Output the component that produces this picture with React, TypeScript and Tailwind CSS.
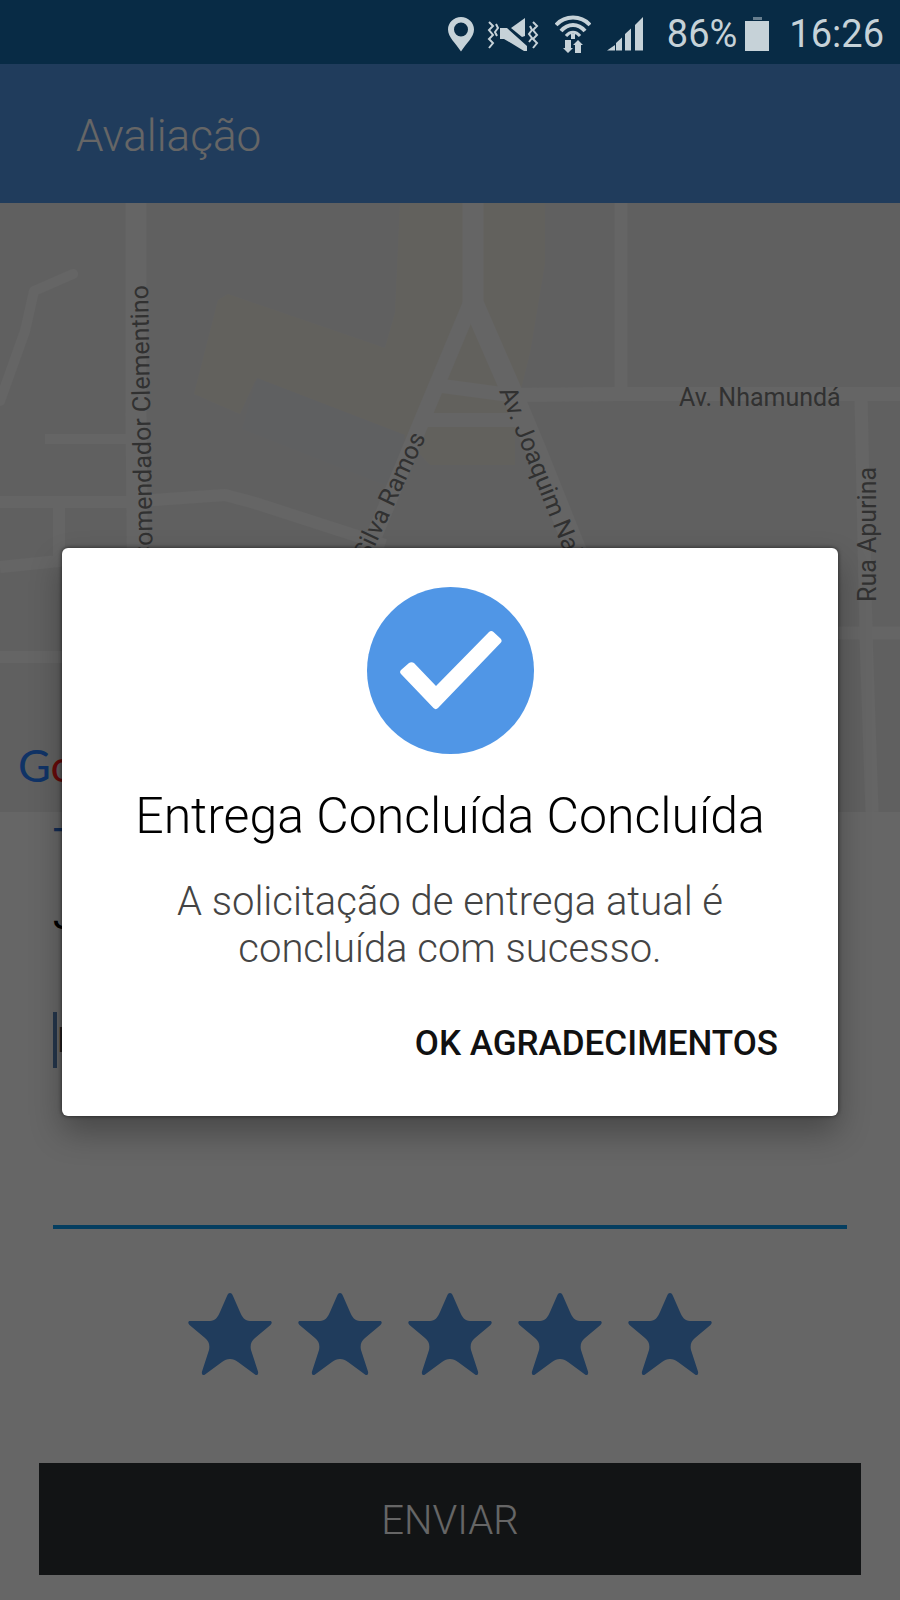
import { useState } from "react";

const STARS = [1, 2, 3, 4, 5];

function StatusBar() {
  return (
    <div className="flex h-16 items-center justify-end bg-[#082b45] pt-1 pr-4 text-[#c6d2d8]">
      <svg className="mr-3 h-9 w-7" viewBox="0 0 28 36" fill="currentColor" aria-hidden="true">
        <path
          fillRule="evenodd"
          d="M14 1C6.800 1 1 6.600 1 13.500 1 21 8.500 27 14 35.500 19.500 27 27 21 27 13.500 27 6.600 21.200 1 14 1Zm0 5.500a7 7 0 1 1 0 14 7 7 0 0 1 0-14Z"
        />
      </svg>
      <svg className="mr-4 h-9 w-[52px]" viewBox="0 0 52 36" fill="none" aria-hidden="true">
        <path d="M13 12h7l20 18v5h-3L24 27l-7-4h-4Z" fill="currentColor" />
        <path d="M24 12 38 2v18l-3 1Z" fill="currentColor" />
        <path
          d="m2 6 4 4-4 4 4 5-4 4 4 4-4 5M46 6l4 4-4 4 4 5-4 4 4 4-4 5M9 8l2 4-3 4 2 4M43 10l2 4-3 4 3 4-3 4"
          stroke="currentColor"
          strokeWidth="2"
        />
      </svg>
      <svg className="mr-4 h-10 w-9" viewBox="0 0 36 40" fill="none" stroke="currentColor" aria-hidden="true">
        <path d="M1 11C10 1 26 1 35 11" strokeWidth="4" />
        <path d="M6 17c7-8 17-8 24 0" strokeWidth="4" />
        <path d="M11 22c4-5 10-5 14 0" strokeWidth="3" />
        <path d="M18 20v5" strokeWidth="4" />
        <path d="M13 26v9M23 30v9" strokeWidth="6" />
        <path d="m8 34 5 5 5-5ZM18 31l5-5 5 5Z" fill="currentColor" stroke="none" />
      </svg>
      <svg className="mr-6 h-9 w-9" viewBox="0 0 36 36" fill="currentColor" aria-hidden="true">
        <path d="M0 34.500 8 29v5.500ZM9 27l6-5.500v13H9ZM18 18l6-5.500v22h-6ZM28 9l8-8v33.500h-8Z" />
      </svg>
      <span className="mr-2 text-[38px] leading-none">86%</span>
      <svg className="mr-5 h-9 w-6" viewBox="0 0 24 36" fill="currentColor" aria-hidden="true">
        <path d="M8 1h9v3H8Z" opacity=".5" />
        <path d="M0 5h24v30H0Z" />
      </svg>
      <time className="text-[38px] leading-none">16:26</time>
    </div>
  );
}

function StreetMap() {
  return (
    <svg
      className="absolute inset-0 h-full w-full"
      viewBox="0 0 900 609"
      preserveAspectRatio="xMidYMid slice"
      role="img"
      aria-label="Mapa"
    >
      <path d="M400 0h145v60l-15 90-15 60v52h-85l-25-27-150-57-15 33-46-20 24-94 10-6 157 54 10-35Z" fill="#f6f3e9" />
      <path d="m257 175 148 57-15 52-148-58Z" fill="#edeff3" />

      {/* roads */}
      <g fill="none" stroke="#fcfcfc" strokeLinejoin="round">
        <path d="M136 0v210l4 399" strokeWidth="21" />
        <path d="M73 71 34 88l-9 40L0 198" strokeWidth="10" strokeLinecap="round" />
        <path d="M45 236h88" strokeWidth="10" />
        <path d="M0 299h125l100-7 30 8 130 42M59 300v58L0 364M0 454h120" strokeWidth="12" />
        <path d="M473 0v100l37 85 25 60 50 125" strokeWidth="21" />
        <path d="m473 95-48 115-60 145" strokeWidth="16" />
        <path d="m435 182 75 10 110-1h280M427 217h95" strokeWidth="14" />
        <path d="M621 0v190M861 192l5 240 6 177M838 430h62" strokeWidth="13" />
      </g>

      {/* street names */}
      <g fill="#7c7c7c" fontSize="25">
        <text transform="translate(148 82) rotate(-91)" textAnchor="end">
          Comendador Clementino
        </text>
        <text transform="translate(426 234) rotate(-65)" textAnchor="end">
          Silva Ramos
        </text>
        <text transform="translate(499 188) rotate(68)">Av. Joaquim Nabuco</text>
        <text x="679" y="203">
          Av. Nhamundá
        </text>
        <text transform="translate(876 399) rotate(-90)">Rua Apurina</text>
      </g>
      <text x="18" y="579" fontSize="45" fontFamily="Lato, sans-serif">
        <tspan fill="#2a80ff">G</tspan>
        <tspan fill="#ff1a1a">o</tspan>
      </text>
    </svg>
  );
}

function Star({ filled }: { filled: boolean }) {
  return (
    <svg className="h-[84px] w-[84px]" viewBox="0 0 84 84" aria-hidden="true">
      <path
        d="M42 1c1.500 0 2.200 1 3 3l7 16c2 5 5 9 10 9h20c2.200 0 2.200 2.500.500 4L67 46c-4 3.500-5 7-4 12l7 21.500c.700 2.500-1 4.500-3 3L50 70c-5-4-11-4-16 0L17 82.500c-2 1.500-3.700-.500-3-3L21 58c1-5 0-8.500-4-12L1.500 33c-1.700-1.500-1.700-4 .500-4h20c5 0 8-4 10-9l7-16c.800-2 1.500-3 3-3Z"
        fill={filled ? "#5096e6" : "#d0d0d0"}
      />
    </svg>
  );
}

export default function App() {
  const [rating, setRating] = useState(5);
  const [open, setOpen] = useState(true);

  return (
    <div className="flex min-h-screen flex-col bg-white font-['Roboto',sans-serif]">
      <StatusBar />

      <div className="relative flex flex-1 flex-col">
        <header className="flex h-[139px] items-center bg-[#5096e6] px-[76px] pt-1">
          <h1 className="text-[44px] font-light text-white">Avaliação</h1>
        </header>

        <div className="relative min-h-[400px] flex-1 overflow-hidden bg-[#f1f1f1]">
          <StreetMap />
        </div>

        <form className="flex flex-col" onSubmit={(e) => e.preventDefault()}>
          <div className="px-[53px] pt-2">
            <p className="text-[40px] leading-[48px] text-[#2f6fd0]">T</p>
            <p className="mt-6 text-[40px] leading-[48px] text-black">J</p>
            <div className="mt-16 flex h-[225px] items-start border-b-4 border-[#0e9cf0] pt-2">
              <span className="h-14 w-1 bg-[#5a86b8]" />
              <input
                aria-label="Comentário"
                placeholder="E"
                className="h-14 min-w-0 flex-1 bg-transparent text-[35px] outline-none placeholder:text-[#555555]"
              />
            </div>
          </div>

          <div className="mt-[63px] flex justify-center gap-[26px]">
            {STARS.map((n) => (
              <button key={n} type="button" aria-label={`${n} de 5`} onClick={() => setRating(n)}>
                <Star filled={n <= rating} />
              </button>
            ))}
          </div>

          <div className="px-[39px] pt-[87px] pb-[25px]">
            <button type="submit" className="h-[112px] w-full bg-[#2d3236] pt-1 text-[40px] font-light text-white">
              ENVIAR
            </button>
          </div>
        </form>

        {open && (
          <div className="absolute inset-0 flex items-center justify-center bg-black/60 px-[62px]">
            <div
              role="dialog"
              aria-labelledby="dialog-title"
              className="flex w-full flex-col items-center rounded-md bg-white px-[60px] pt-[39px] pb-10 shadow-[0_16px_32px_rgba(0,0,0,0.3),0_0_4px_rgba(0,0,0,0.6)]"
            >
              <svg className="h-[167px] w-[167px]" viewBox="0 0 167 167" aria-hidden="true">
                <circle cx="83.500" cy="83.500" r="83.500" fill="#5096e6" />
                <path
                  d="m34 83 8-7c1.500-1 3.500-1 5 0L69 99l53-54c1.500-1.500 3-1.500 4.500 0l7 6.500c1.500 1.500 1.500 3 0 4.500L71 121c-1.500 1.500-3 1.500-4.500 0L34 87c-1.200-1.200-1.200-3 0-4Z"
                  fill="#fff"
                />
              </svg>
              <h2 id="dialog-title" className="mt-8 text-center text-[50px] leading-[60px] font-light text-black">
                Entrega Concluída Concluída
              </h2>
              <p className="mt-8 max-w-[600px] text-center text-[40px] leading-[47px] font-light text-[#444444]">
                A solicitação de entrega atual é concluída com sucesso.
              </p>
              <button
                type="button"
                onClick={() => setOpen(false)}
                className="mt-10 self-end text-[35px] leading-[64px] font-medium text-[#111111]"
              >
                OK AGRADECIMENTOS
              </button>
            </div>
          </div>
        )}
      </div>
    </div>
  );
}
